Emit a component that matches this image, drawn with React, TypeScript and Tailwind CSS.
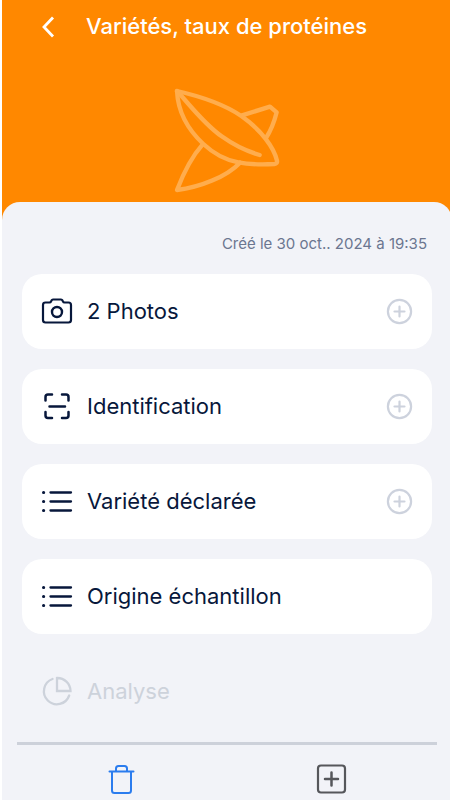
import type { ReactNode, SVGProps } from 'react';
import { clsx } from 'clsx';

function Icon({ children, ...props }: SVGProps<SVGSVGElement>) {
	return (
		<svg
			aria-hidden="true"
			fill="none"
			height="32"
			stroke="currentColor"
			strokeLinecap="round"
			strokeLinejoin="round"
			strokeWidth="2"
			viewBox="0 0 32 32"
			width="32"
			{...props}
		>
			{children}
		</svg>
	);
}

const CameraIcon = () => (
	<Icon strokeWidth="2.2">
		<path d="M4.500 7.500h4c.8 0 1.200-.3 1.500-1l.5-1c.3-.7.8-1 1.500-1h8c.7 0 1.200.3 1.500 1l.5 1c.3.7.7 1 1.500 1h4c1.700 0 2.500.8 2.500 2.500v15c0 1.700-.8 2.500-2.500 2.500h-23C2.800 27.500 2 26.700 2 25V10c0-1.700.8-2.500 2.500-2.500z" />
		<circle cx="16" cy="17" r="5" strokeWidth="2.400" />
	</Icon>
);

const ScanIcon = () => (
	<Icon strokeWidth="2.500">
		<path d="M11 4.500H7C5.300 4.500 4.500 5.300 4.500 7v3.500M21 4.500h4c1.700 0 2.500.8 2.500 2.500v3.500M11 28H7c-1.700 0-2.500-.8-2.500-2.500V22M21 28h4c1.700 0 2.500-.8 2.500-2.500V22M8.500 16.500h15.500" />
	</Icon>
);

const ListIcon = () => (
	<Icon strokeWidth="2.300">
		<path d="M9.500 7.500h20.500M9.500 16.500h20.500M9.500 25.500h20.500" />
		<path d="M2.500 7.500h.2M2.500 16.500h.2M2.500 25.500h.2" strokeWidth="3" />
	</Icon>
);

const PieIcon = () => (
	<Icon strokeWidth="2.300">
		<path d="M11.500 4A13 13 0 1 0 28.200 20.500" />
		<path d="M16 3v13h13.500A13.200 13.200 0 0 0 16 3z" strokeLinejoin="miter" />
	</Icon>
);

const PlusCircleIcon = () => (
	<Icon strokeWidth="2.200">
		<circle cx="15.500" cy="16.500" r="11.600" />
		<path d="M15.500 11.500v10M10.500 16.500h10" />
	</Icon>
);

function SeedLogo() {
	return (
		<svg
			aria-hidden="true"
			className="size-[108px] text-[#ffad4d]"
			fill="none"
			stroke="currentColor"
			strokeLinecap="round"
			strokeLinejoin="round"
			strokeWidth="13"
			viewBox="39 36 324 324"
		>
			<path d="M51 48C130 66 200 93 244 123C305 166 342 218 351 257Q353 266 343 267C305 269 265 268 235 262C195 255 160 235 130 207C85 165 54 115 51 48Z" />
			<path d="M51 48C90 90 130 145 185 184C220 209 260 229 299 240" />
			<path d="M128 208C95 245 70 295 51 345C120 337 200 305 240 263" />
			<path d="M246 121L330 95L350 112C343 140 332 168 318 189" />
		</svg>
	);
}

type RowProps = {
	icon: ReactNode;
	label: string;
	/** Shows the add mark at the end of the row */
	addable?: boolean;
	disabled?: boolean;
};

function Row({ icon, label, addable, disabled }: RowProps) {
	return (
		<button
			type="button"
			disabled={disabled}
			className={clsx(
				'flex h-[75px] w-full items-center rounded-[20px] pr-4 pb-0.5 pl-[19px] text-left text-[22px] leading-7',
				disabled ? 'text-[#cdd2db]' : 'bg-white text-[#07173b]'
			)}
		>
			{icon}
			<span className="ml-3.5 flex-1">{label}</span>
			{addable && (
				<span className="text-[#cdd2dd]">
					<PlusCircleIcon />
				</span>
			)}
		</button>
	);
}

export default function App() {
	return (
		<div className="min-h-screen overflow-hidden bg-white pl-0.5 font-['Inter','Liberation_Sans',sans-serif]">
			<div className="-mr-0.5 bg-[#ff8800]">
				<header className="flex h-[52px] items-center">
					<button type="button" aria-label="Retour" className="ml-[30px] text-white">
						<Icon strokeLinecap="butt" strokeLinejoin="miter" strokeWidth="2.800">
							<path d="M21 7.500L12 17L21 26.500" />
						</Icon>
					</button>
					<h1 className="ml-[22px] text-[22px] leading-7 font-medium text-white">
						Variétés, taux de protéines
					</h1>
				</header>
				<div className="flex h-[150px] items-center justify-center pt-[28px]">
					<SeedLogo />
				</div>

				<main className="rounded-t-[18px] bg-[#f2f3f8] px-5 pt-8">
					<p className="mb-[20px] pr-[5px] text-right text-[15px] leading-5 text-[#6b7690]">
						Créé le 30 oct.. 2024 à 19:35
					</p>
					<div className="flex flex-col gap-5">
						<Row icon={<CameraIcon />} label="2 Photos" addable />
						<Row icon={<ScanIcon />} label="Identification" addable />
						<Row icon={<ListIcon />} label="Variété déclarée" addable />
						<Row icon={<ListIcon />} label="Origine échantillon" />
						<Row icon={<PieIcon />} label="Analyse" disabled />
					</div>
					<nav className="-mx-[5px] mt-[13px] grid grid-cols-2 justify-items-center border-t-[3px] border-[#cdd1da] pt-[18px] pb-2">
						<button type="button" aria-label="Supprimer" className="text-[#2b7cee]">
							<Icon>
								<path d="M3.500 8.500h24M6 9v18.500c0 1.700.8 2.500 2.500 2.500h14c1.700 0 2.500-.8 2.500-2.500V9" />
								<path d="M10 8V5.500C10 4 11 3 12.500 3h6C20 3 21 4 21 5.500V8" />
							</Icon>
						</button>
						<button type="button" aria-label="Ajouter" className="text-[#56575b]">
							<Icon strokeWidth="2.200">
								<rect x="2" y="2.500" width="27" height="27" rx="3" />
								<path d="M15.500 9.500v13M9 16h13" strokeWidth="2.500" />
							</Icon>
						</button>
					</nav>
				</main>
			</div>
		</div>
	);
}
